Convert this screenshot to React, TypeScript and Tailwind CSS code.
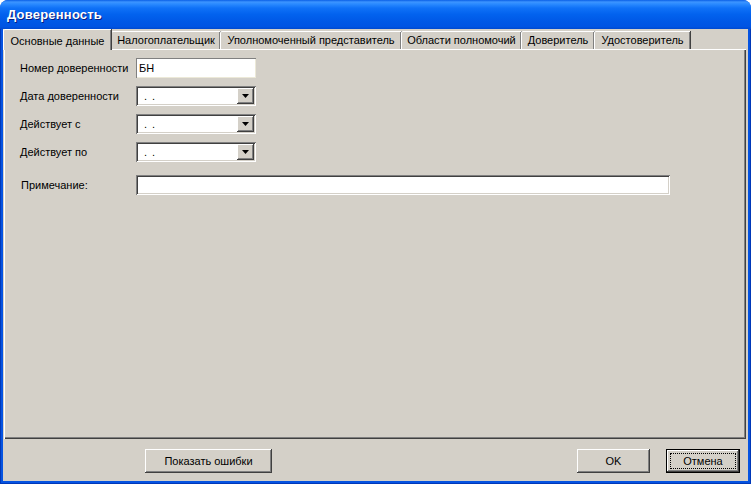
import React from "react";

const raised =
  "shadow-[inset_-1px_-1px_#404040,inset_1px_1px_#ffffff,inset_-2px_-2px_#808080,inset_2px_2px_#d4d0c8]";
const sunken =
  "shadow-[inset_1px_1px_#808080,inset_-1px_-1px_#ffffff,inset_2px_2px_#404040,inset_-2px_-2px_#d4d0c8]";

function Combo() {
  return (
    <div className={`w-[120px] h-[20px] bg-white flex items-center ${sunken}`}>
      <span className="flex-1 pl-[8px] leading-none tracking-[1px]">. .</span>
      <div className={`w-[17px] h-[16px] mr-[2px] bg-[#d4d0c8] flex items-center justify-center ${raised}`}>
        <svg width="7" height="4" viewBox="0 0 7 4">
          <polygon points="0,0 7,0 3.5,4" fill="#000" />
        </svg>
      </div>
    </div>
  );
}

function Row({ label, children }: { label: string; children: React.ReactNode }) {
  return (
    <div className="flex items-center h-[20px]">
      <div className="w-[116px] shrink-0">{label}</div>
      {children}
    </div>
  );
}

const tabs = [
  { t: "Налогоплательщик", w: 109 },
  { t: "Уполномоченный представитель", w: 181 },
  { t: "Области полномочий", w: 120 },
  { t: "Доверитель", w: 73 },
  { t: "Удостоверитель", w: 96 },
];

export default function App() {
  return (
    <div className="w-[751px] h-[484px] bg-white font-['Tahoma','Liberation_Sans',sans-serif] text-[11px] text-black">
      <div className="w-full h-full flex flex-col rounded-t-[8px] overflow-hidden bg-[#0553e1]">
        {/* Title bar */}
        <div className="h-[29px] shrink-0 flex items-center pl-[7px] bg-[linear-gradient(to_bottom,#0a5fe6_0%,#3d95ff_7%,#2a8aff_14%,#0f71f7_28%,#0262ee_50%,#0058e6_75%,#0054e3_92%,#0049cf_100%)]">
          <span className="text-white font-bold text-[13px] font-['Liberation_Sans',sans-serif] tracking-[0.2px] [text-shadow:1px_1px_#0a1e80]">
            Доверенность
          </span>
        </div>
        {/* Body */}
        <div className="flex-1 flex border-x border-b border-[#0038b8] bg-[#0553e1] px-[2px] pb-[2px]">
          <div className="flex-1 flex flex-col bg-[#d4d0c8]">
            {/* Tabs */}
            <div className="h-[20px] shrink-0 flex items-end">
              <div className="relative z-10 w-[108px] h-[21px] -mb-[1px] bg-[#d4d0c8] border-l border-t border-white rounded-tl-[2px] shadow-[inset_-1px_0_#808080,1px_0_#404040] flex items-start justify-center pt-[3px]">
                Основные данные
              </div>
              {tabs.map((tab, i) => (
                <div
                  key={i}
                  style={{ width: tab.w }}
                  className="h-[18px] bg-[#d4d0c8] border-l border-t border-white rounded-tl-[2px] shadow-[inset_-1px_0_#808080,1px_0_#404040] flex items-center justify-center"
                >
                  {tab.t}
                </div>
              ))}
            </div>
            {/* Panel */}
            <div className="h-[390px] shrink-0 ml-[1px] mr-[2px] bg-[#d4d0c8] shadow-[inset_1px_1px_#ffffff,inset_-1px_-1px_#404040,inset_-2px_-2px_#808080] pt-[9px] pl-[16px] flex flex-col">
              <Row label="Номер доверенности">
                <div className={`w-[120px] h-[20px] bg-white flex items-center pl-[3px] shadow-[inset_1px_1px_#808080,inset_-1px_-1px_#ece9d8]`}>
                  БН
                </div>
              </Row>
              <div className="h-[8px]" />
              <Row label="Дата доверенности">
                <Combo />
              </Row>
              <div className="h-[8px]" />
              <Row label="Действует с">
                <Combo />
              </Row>
              <div className="h-[8px]" />
              <Row label="Действует по">
                <Combo />
              </Row>
              <div className="h-[13px]" />
              <div className="flex items-center h-[20px]">
                <div className="w-[116px] shrink-0 pl-[1px]">Примечание:</div>
                <div className={`w-[534px] h-[20px] bg-white ${sunken}`} />
              </div>
            </div>
            {/* Buttons */}
            <div className="flex-1 flex items-start pt-[10px] pl-[142px] pr-[8px]">
              <div className={`w-[127px] h-[24px] flex items-center justify-center bg-[#d4d0c8] ${raised}`}>
                Показать ошибки
              </div>
              <div className="flex-1" />
              <div className={`w-[73px] h-[24px] flex items-center justify-center bg-[#d4d0c8] ${raised}`}>
                OK
              </div>
              <div className="w-[16px]" />
              <div className="relative w-[74px] h-[24px] border border-black bg-[#d4d0c8] flex items-center justify-center shadow-[inset_-1px_-1px_#404040,inset_1px_1px_#ffffff,inset_-2px_-2px_#808080]">
                <div className="absolute inset-[3px] border border-dotted border-black" />
                Отмена
              </div>
            </div>
          </div>
        </div>
      </div>
    </div>
  );
}
